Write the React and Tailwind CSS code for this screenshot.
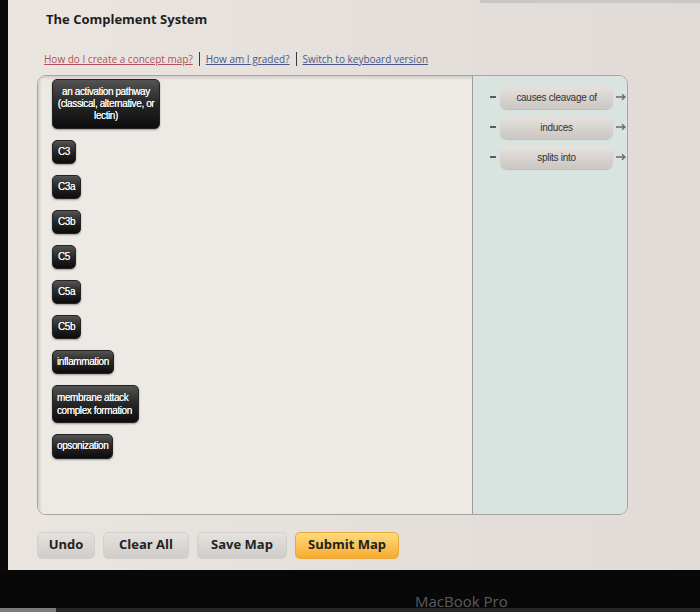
import React from "react";

const nodes = ["C3", "C3a", "C3b", "C5", "C5a", "C5b"];

const links = ["causes cleavage of", "induces", "splits into"];

function Node({ children, className = "" }) {
  return (
    <div
      className={`flex items-center rounded-[5px] border border-[#222] bg-gradient-to-b from-[#545454] via-[#262626] to-[#0c0c0c] text-[10px] leading-[12px] tracking-[-0.4px] text-[#f4f4f4] shadow-[0_1px_2px_rgba(0,0,0,0.35)] [text-shadow:0_0_0.6px_#fff] [font-family:'Liberation_Sans',Arial,sans-serif] ${className}`}
    >
      {children}
    </div>
  );
}

function LinkRow({ label }) {
  return (
    <div className="flex items-center">
      <div className="ml-[17px] h-[2px] w-[6px] bg-[#5b5b5b]" />
      <div className="ml-[4px] flex h-[23px] w-[114px] items-center justify-center rounded-[7px] bg-gradient-to-b from-[#e6e2de] to-[#cbc6c2] text-[10px] tracking-[-0.3px] text-[#333] shadow-[0_1px_1px_rgba(0,0,0,0.15)] [font-family:'Liberation_Sans',Arial,sans-serif]">
        {label}
      </div>
      <svg width="11" height="8" viewBox="0 0 11 8" className="ml-[3px]">
        <path d="M0 4h9M6 1.2l3 2.8-3 2.8" fill="none" stroke="#6b6b6b" strokeWidth="1.4" />
      </svg>
    </div>
  );
}

function Button({ children, w, orange }) {
  return (
    <div
      className={`flex h-[27px] ${w} items-center justify-center rounded-[5px] text-[13px] font-bold text-[#222] [font-family:'Open_Sans',sans-serif] ${
        orange
          ? "border border-[#e9a93a] bg-gradient-to-b from-[#fedb7a] to-[#f6ab2c]"
          : "border border-[#d3cfcc] bg-gradient-to-b from-[#e4e1de] to-[#d0ccc9]"
      }`}
    >
      {children}
    </div>
  );
}

export default function App() {
  return (
    <div className="flex h-[612px] w-[700px] flex-col overflow-hidden bg-[#080808]">
      <div className="flex h-[570px]">
        <div className="w-[8px] bg-[#0a0a0a]" />
        <div className="flex flex-1 flex-col bg-gradient-to-r from-[#ebe5e0] to-[#e0dbd7]">
          {/* browser chrome sliver */}
          <div className="flex h-[3px] justify-end">
            <div className="w-[220px] bg-[#cbc7c4]" />
          </div>

          <h1 className="pl-[38px] pt-[7px] text-[13px] font-bold text-[#1f1f1f] [font-family:'Open_Sans',sans-serif]">
            The Complement System
          </h1>

          <div className="mt-[22px] flex items-center pl-[36px] text-[10px] [font-family:'Open_Sans',sans-serif]">
            <span className="text-[#b4505a] underline">How do I create a concept map?</span>
            <span className="mx-[6px] inline-block h-[14px] w-px bg-[#3a3a3a]" />
            <span className="text-[#4a5889] underline">How am I graded?</span>
            <span className="mx-[6px] inline-block h-[14px] w-px bg-[#3a3a3a]" />
            <span className="text-[#4a5889] underline">Switch to keyboard version</span>
          </div>

          {/* concept map canvas */}
          <div className="ml-[29px] mt-[8px] flex h-[440px] w-[591px] overflow-hidden rounded-[9px] border border-[#a7a4a1]">
            <div className="flex flex-1 flex-col items-start gap-[11px] bg-[#ede9e5] pl-[14px] pt-[3px] shadow-[inset_2px_2px_3px_rgba(0,0,0,0.12)]">
              <Node className="h-[50px] w-[108px] justify-center px-[3px] text-center">
                an activation pathway (classical, alternative, or lectin)
              </Node>
              {nodes.map((n) => (
                <Node key={n} className="h-[24px] px-[5px]">
                  {n}
                </Node>
              ))}
              <Node className="h-[24px] px-[4px]">inflammation</Node>
              <Node className="h-[38px] whitespace-nowrap px-[4px] pr-[6px] leading-[13px]">
                membrane attack
                <br />
                complex formation
              </Node>
              <Node className="h-[25px] px-[4px]">opsonization</Node>
            </div>
            <div className="flex w-[155px] flex-col gap-[7px] border-l border-[#9d9d9a] bg-[#d9e3e0] pt-[10px]">
              {links.map((l) => (
                <LinkRow key={l} label={l} />
              ))}
            </div>
          </div>

          <div className="ml-[29px] mt-[17px] flex gap-[8px]">
            <Button w="w-[58px]">Undo</Button>
            <Button w="w-[86px]">Clear All</Button>
            <Button w="w-[90px]">Save Map</Button>
            <Button w="w-[104px]" orange>
              Submit Map
            </Button>
          </div>
        </div>
      </div>

      {/* laptop bezel */}
      <div className="flex flex-1 items-end pl-[415px]">
        <span className="text-[15px] leading-[14px] text-[#5c5c5c] [font-family:'Open_Sans',sans-serif]">
          MacBook Pro
        </span>
      </div>
      <div className="flex h-[4px] bg-[#262626]">
        <div className="w-[56px] bg-[#7a7a7a]" />
      </div>
    </div>
  );
}
